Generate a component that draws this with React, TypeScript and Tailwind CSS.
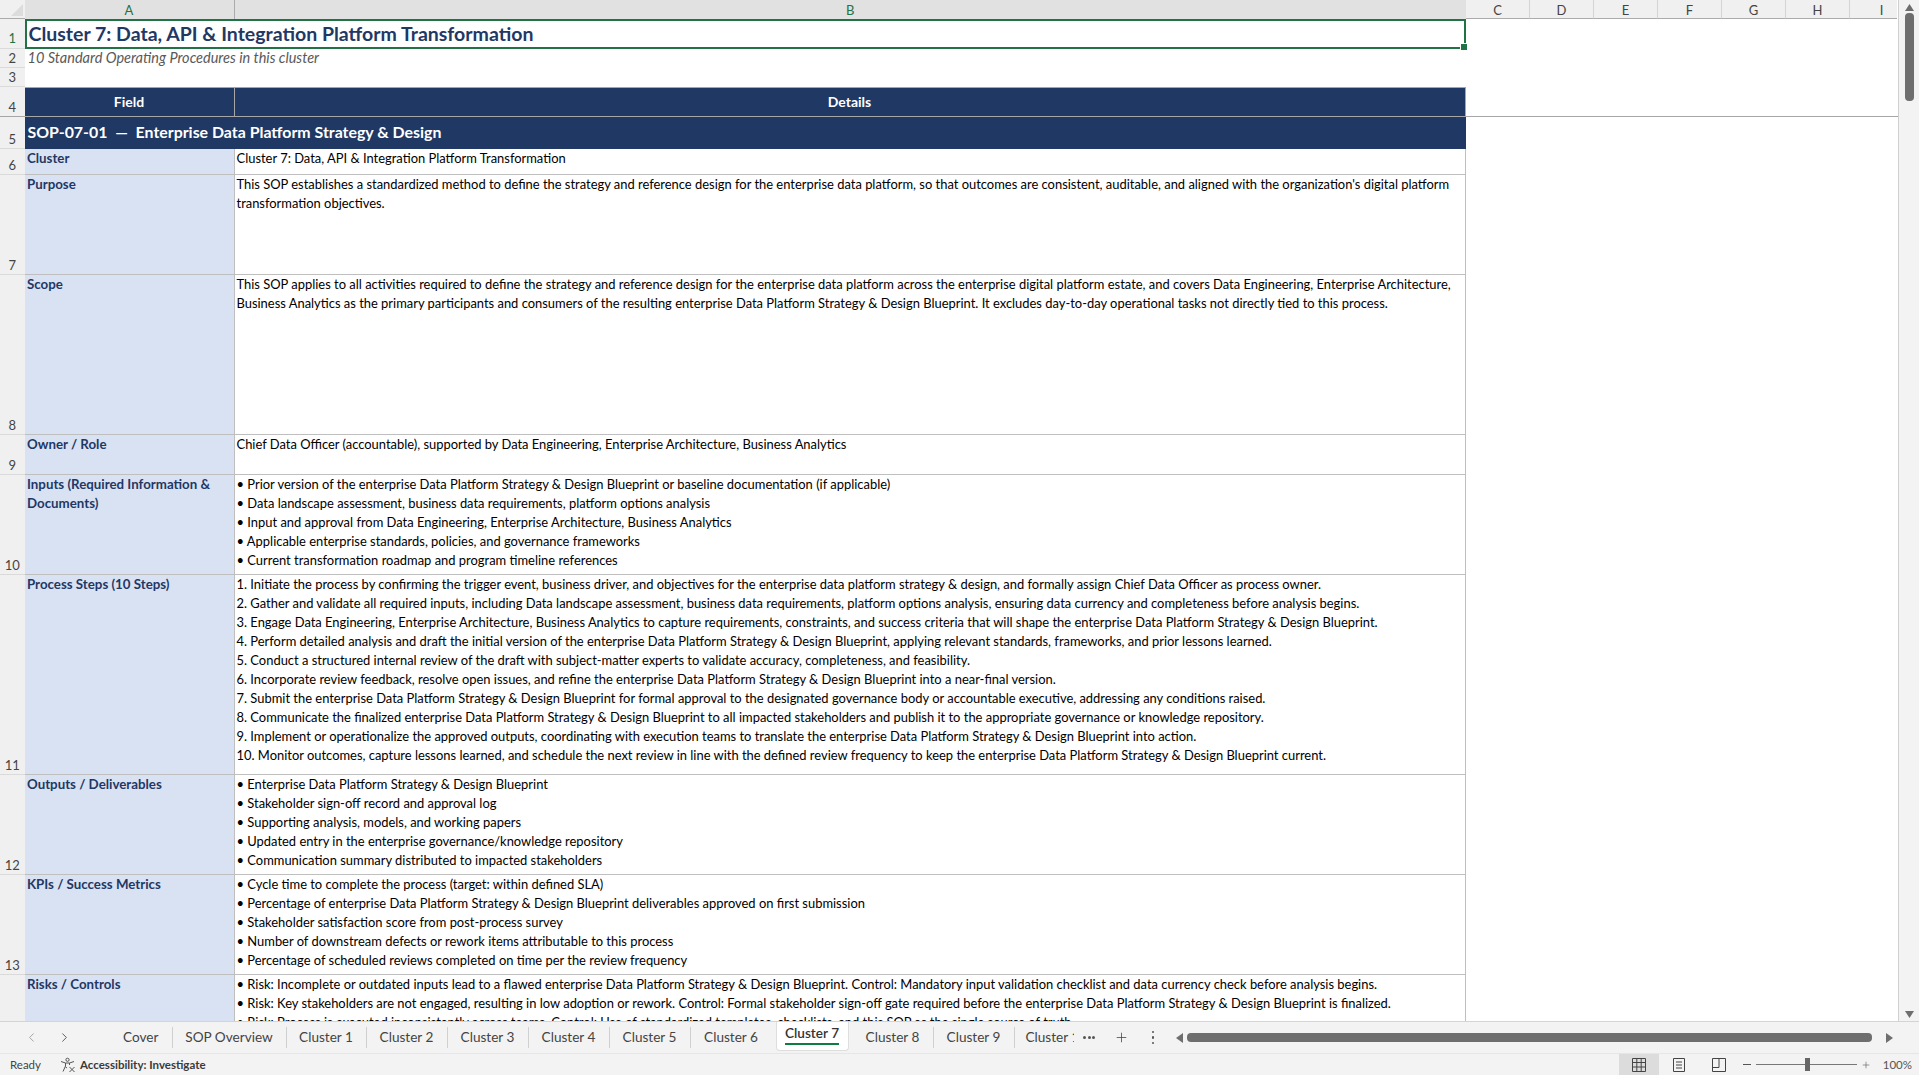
import { ChevronLeft, ChevronRight, Plus } from "lucide-react";

const FONT = "font-['Lato','Liberation_Sans',sans-serif]";

const rows = [
  {
    n: 6,
    h: "h-[26.5px]",
    label: ["Cluster"],
    lines: ["Cluster 7: Data, API & Integration Platform Transformation"],
  },
  {
    n: 7,
    h: "h-[100px]",
    label: ["Purpose"],
    lines: [
      "This SOP establishes a standardized method to define the strategy and reference design for the enterprise data platform, so that outcomes are consistent, auditable, and aligned with the organization's digital platform",
      "transformation objectives.",
    ],
  },
  {
    n: 8,
    h: "h-[160px]",
    label: ["Scope"],
    lines: [
      "This SOP applies to all activities required to define the strategy and reference design for the enterprise data platform across the enterprise digital platform estate, and covers Data Engineering, Enterprise Architecture,",
      "Business Analytics as the primary participants and consumers of the resulting enterprise Data Platform Strategy & Design Blueprint. It excludes day-to-day operational tasks not directly tied to this process.",
    ],
  },
  {
    n: 9,
    h: "h-[40px]",
    label: ["Owner / Role"],
    lines: ["Chief Data Officer (accountable), supported by Data Engineering, Enterprise Architecture, Business Analytics"],
  },
  {
    n: 10,
    h: "h-[100px]",
    label: ["Inputs (Required Information &", "Documents)"],
    lines: [
      "• Prior version of the enterprise Data Platform Strategy & Design Blueprint or baseline documentation (if applicable)",
      "• Data landscape assessment, business data requirements, platform options analysis",
      "• Input and approval from Data Engineering, Enterprise Architecture, Business Analytics",
      "• Applicable enterprise standards, policies, and governance frameworks",
      "• Current transformation roadmap and program timeline references",
    ],
  },
  {
    n: 11,
    h: "h-[200px]",
    label: ["Process Steps (10 Steps)"],
    lines: [
      "1. Initiate the process by confirming the trigger event, business driver, and objectives for the enterprise data platform strategy & design, and formally assign Chief Data Officer as process owner.",
      "2. Gather and validate all required inputs, including Data landscape assessment, business data requirements, platform options analysis, ensuring data currency and completeness before analysis begins.",
      "3. Engage Data Engineering, Enterprise Architecture, Business Analytics to capture requirements, constraints, and success criteria that will shape the enterprise Data Platform Strategy & Design Blueprint.",
      "4. Perform detailed analysis and draft the initial version of the enterprise Data Platform Strategy & Design Blueprint, applying relevant standards, frameworks, and prior lessons learned.",
      "5. Conduct a structured internal review of the draft with subject-matter experts to validate accuracy, completeness, and feasibility.",
      "6. Incorporate review feedback, resolve open issues, and refine the enterprise Data Platform Strategy & Design Blueprint into a near-final version.",
      "7. Submit the enterprise Data Platform Strategy & Design Blueprint for formal approval to the designated governance body or accountable executive, addressing any conditions raised.",
      "8. Communicate the finalized enterprise Data Platform Strategy & Design Blueprint to all impacted stakeholders and publish it to the appropriate governance or knowledge repository.",
      "9. Implement or operationalize the approved outputs, coordinating with execution teams to translate the enterprise Data Platform Strategy & Design Blueprint into action.",
      "10. Monitor outcomes, capture lessons learned, and schedule the next review in line with the defined review frequency to keep the enterprise Data Platform Strategy & Design Blueprint current.",
    ],
  },
  {
    n: 12,
    h: "h-[100px]",
    label: ["Outputs / Deliverables"],
    lines: [
      "• Enterprise Data Platform Strategy & Design Blueprint",
      "• Stakeholder sign-off record and approval log",
      "• Supporting analysis, models, and working papers",
      "• Updated entry in the enterprise governance/knowledge repository",
      "• Communication summary distributed to impacted stakeholders",
    ],
  },
  {
    n: 13,
    h: "h-[100px]",
    label: ["KPIs / Success Metrics"],
    lines: [
      "• Cycle time to complete the process (target: within defined SLA)",
      "• Percentage of enterprise Data Platform Strategy & Design Blueprint deliverables approved on first submission",
      "• Stakeholder satisfaction score from post-process survey",
      "• Number of downstream defects or rework items attributable to this process",
      "• Percentage of scheduled reviews completed on time per the review frequency",
    ],
  },
  {
    n: 14,
    h: "h-[100px]",
    label: ["Risks / Controls"],
    lines: [
      "• Risk: Incomplete or outdated inputs lead to a flawed enterprise Data Platform Strategy & Design Blueprint. Control: Mandatory input validation checklist and data currency check before analysis begins.",
      "• Risk: Key stakeholders are not engaged, resulting in low adoption or rework. Control: Formal stakeholder sign-off gate required before the enterprise Data Platform Strategy & Design Blueprint is finalized.",
      "• Risk: Process is executed inconsistently across teams. Control: Use of standardized templates, checklists, and this SOP as the single source of truth.",
    ],
  },
];

const tabs = ["Cover", "SOP Overview", "Cluster 1", "Cluster 2", "Cluster 3", "Cluster 4", "Cluster 5", "Cluster 6", "Cluster 7", "Cluster 8", "Cluster 9"];

function RowNum({ n, h, active, noBorder }: { n: number; h: string; active?: boolean; noBorder?: boolean }) {
  return (
    <div
      className={`${h} w-[24.5px] shrink-0 bg-[#f0f0f0] flex items-end justify-center text-[13px] ${active ? "leading-[20px]" : "leading-[17px]"} ${noBorder ? "" : "border-b border-[#dadada]"} ${active ? "text-[#217346] bg-[#e1e1e1]" : "text-[#444]"}`}
    >
      {n}
    </div>
  );
}

function ColHeaders() {
  const cols = ["C", "D", "E", "F", "G", "H"];
  return (
    <div className="flex h-[19px] shrink-0 text-[13px] leading-[21px] text-[#444]">
      <div className="w-[24.5px] shrink-0 bg-[#f0f0f0] border-b border-[#ababab] flex items-end justify-end p-[2px]">
        <div className="w-0 h-0 border-l-[12px] border-l-transparent border-b-[12px] border-b-[#dcdcdc]" />
      </div>
      <div className="w-[210px] shrink-0 bg-[#e1e1e1] text-center text-[#217346] border-r border-[#ababab]">A</div>
      <div className="w-[1231.5px] shrink-0 bg-[#e1e1e1] text-center text-[#217346]">B</div>
      {cols.map((c) => (
        <div key={c} className="w-[64px] shrink-0 bg-[#f0f0f0] text-center border-r border-[#d4d4d4] border-b border-b-[#ababab]">
          {c}
        </div>
      ))}
      <div className="w-[47px] shrink-0 bg-[#f0f0f0] text-center border-b border-[#ababab] pl-[16px]">I</div>
    </div>
  );
}

function Sheet() {
  return (
    <div className="flex-1 min-h-0 overflow-hidden bg-white">
      {/* title rows */}
      <div className="flex">
        <RowNum n={1} h="h-[30px]" active />
        <div className="relative w-[1441.5px] h-[30px] border-2 border-[#217346] pl-[2px] text-[19.5px] leading-[26px] font-bold text-[#1f3864]">
          Cluster 7: Data, API &amp; Integration Platform Transformation
          <div className="absolute right-[-4px] bottom-[-4px] w-[6px] h-[6px] bg-[#217346] border border-white box-content" />
        </div>
      </div>
      <div className="flex">
        <RowNum n={2} h="h-[19px]" />
        <div className="pl-[3px] text-[14.5px] leading-[18px] italic text-[#595959]">10 Standard Operating Procedures in this cluster</div>
      </div>
      <div className="flex">
        <RowNum n={3} h="h-[19px]" />
      </div>
      {/* frozen header */}
      <div className="flex border-b border-[#a6a6a6]">
        <RowNum n={4} h="h-[28.5px]" noBorder />
        <div className="w-[210px] h-[28.5px] bg-[#1f3864] border-r border-t border-[#a6a6a6] text-center text-white font-bold text-[14px] leading-[28px]">Field</div>
        <div className="w-[1231px] h-[28.5px] bg-[#1f3864] border-r border-t border-[#a6a6a6] text-center text-white font-bold text-[14px] leading-[28px]">Details</div>
      </div>
      <div className="flex">
        <RowNum n={5} h="h-[32px]" />
        <div className="w-[1441.5px] h-[32px] bg-[#1f3864] pl-[3px] text-white font-bold text-[15.9px] leading-[30px] whitespace-pre">SOP-07-01  —  Enterprise Data Platform Strategy &amp; Design</div>
      </div>
      {rows.map((r) => (
        <div key={r.n} className="flex">
          <RowNum n={r.n} h={r.h} />
          <div className={`${r.h} w-[210px] shrink-0 bg-[#d9e2f3] border-b border-r border-[#bfbfbf] pl-[2.5px] text-[13.3px] leading-[19px] font-bold text-[#1f3864]`}>
            {r.label.map((l) => (
              <div key={l}>{l}</div>
            ))}
          </div>
          <div className={`${r.h} w-[1231.5px] shrink-0 border-b border-r border-[#bfbfbf] pl-[2px] text-[12.93px] leading-[19px] text-black whitespace-nowrap overflow-hidden`}>
            {r.lines.map((l) => (
              <div key={l}>{l}</div>
            ))}
          </div>
        </div>
      ))}
    </div>
  );
}

function VScroll() {
  return (
    <div className="w-[21px] shrink-0 bg-[#f3f3f3] border-l border-[#d0d0d0] flex flex-col items-center pt-[4px] pb-[3px]">
      <svg width="9" height="7" viewBox="0 0 9 7"><path d="M4.5 0 9 7H0z" fill="#6e6e6e" /></svg>
      <div className="mt-[2px] w-[9px] h-[88px] rounded-[4px] bg-[#6e6e6e]" />
      <div className="flex-1" />
      <svg width="9" height="7" viewBox="0 0 9 7"><path d="M4.5 7 9 0H0z" fill="#6e6e6e" /></svg>
    </div>
  );
}

function TabBar() {
  return (
    <div className="h-[32px] shrink-0 bg-[#f3f3f3] border-t border-[#d4d4d4] flex items-center text-[13.6px] text-[#444]">
      <div className="w-[110px] shrink-0 flex items-center pl-[24px] gap-[18px] text-[#555]">
        <ChevronLeft size={15} strokeWidth={1.5} className="text-[#a0a0a0]" />
        <ChevronRight size={15} strokeWidth={1.5} />
      </div>
      {tabs.map((t) =>
        t === "Cluster 7" ? (
          <div key={t} className="w-[73px] h-[29px] -mt-[3px] mx-[4px] shrink-0 bg-white rounded-b-[4px] border-b border-x border-[#dedede] flex justify-center">
            <span className="h-[23px] px-0 pt-[2px] border-b-2 border-[#107c41] font-semibold text-[#333] leading-[19px]">{t}</span>
          </div>
        ) : (
          <div key={t} className={`${t === "Cover" ? "w-[62.5px]" : t === "SOP Overview" ? "w-[114px]" : t === "Cluster 1" ? "w-[80px]" : "w-[81px]"} shrink-0 text-center ${t === "Cluster 6" ? "" : "border-r border-[#d0d0d0]"}`}>
            {t}
          </div>
        ),
      )}
      <div className="w-[59px] shrink-0 overflow-hidden whitespace-nowrap pl-[11px]">Cluster 10</div>
      <div className="w-[25px] ml-[3px] shrink-0 flex justify-center gap-[1.5px]">
        <span className="w-[3px] h-[3px] bg-[#555] rounded-full" />
        <span className="w-[3px] h-[3px] bg-[#555] rounded-full" />
        <span className="w-[3px] h-[3px] bg-[#555] rounded-full" />
      </div>
      <Plus size={15} strokeWidth={1.25} className="ml-[12px] shrink-0 text-[#444]" />
      <div className="ml-[23px] shrink-0 flex flex-col gap-[3px]">
        <span className="w-[2.5px] h-[2.5px] bg-[#555] rounded-full" />
        <span className="w-[2.5px] h-[2.5px] bg-[#555] rounded-full" />
        <span className="w-[2.5px] h-[2.5px] bg-[#555] rounded-full" />
      </div>
      <div className="ml-[22px] flex-1 flex items-center pr-[26px]">
        <svg width="7" height="10" viewBox="0 0 7 10"><path d="M0 5 7 0v10z" fill="#6e6e6e" /></svg>
        <div className="mx-[4px] flex-1 h-[9px] rounded-[4px] bg-[#6e6e6e]" />
        <div className="w-[10px]" />
        <svg width="7" height="10" viewBox="0 0 7 10"><path d="M7 5 0 0v10z" fill="#6e6e6e" /></svg>
      </div>
    </div>
  );
}

function StatusBar() {
  return (
    <div className="h-[22px] shrink-0 bg-[#f3f3f3] border-t border-[#e6e6e6] flex items-center text-[11.5px] text-[#444]">
      <span className="ml-[10px] w-[50px]">Ready</span>
      <svg width="16" height="16" viewBox="0 0 16 16" fill="none" stroke="#555" strokeWidth="1">
        <circle cx="7.5" cy="2.8" r="1.6" />
        <path d="M1 4.5 5.5 6v3L3 14.5M14 4.5 9.5 6v2M5.5 6h4M5.5 10 7 11" />
        <path d="m9.5 10 5 5m0-5-5 5" />
      </svg>
      <span className="ml-[4px] font-bold text-[#3a3a3a] text-[11.5px]">Accessibility: Investigate</span>
      <div className="flex-1" />
      <div className="w-[40px] h-[22px] bg-[#dcdcdc] flex items-center justify-center">
        <svg width="14" height="14" viewBox="0 0 14 14" fill="none" stroke="#444"><path d="M.5.5h13v13H.5zM.5 4.5h13M.5 9h13M4.8.5v13M9.2.5v13" /></svg>
      </div>
      <div className="w-[40px] flex justify-center">
        <svg width="14" height="14" viewBox="0 0 14 14" fill="none" stroke="#444"><path d="M1.5.5h11v13h-11zM4 4h6M4 7h6M4 10h6" /></svg>
      </div>
      <div className="w-[40px] flex justify-center">
        <svg width="14" height="14" viewBox="0 0 14 14" fill="none" stroke="#444"><path d="M.5.5h13v13H.5zM.5 9.5h6.5V.5M7 9.5h0" /></svg>
      </div>
      <span className="ml-[4px] w-[8px] h-[1px] bg-[#555]" />
      <div className="ml-[5px] relative w-[101px] h-[1px] bg-[#777]">
        <div className="absolute left-[49px] top-[-6px] w-[5px] h-[13px] bg-[#666]" />
      </div>
      <Plus size={10} strokeWidth={1.25} className="ml-[4px]" />
      <span className="ml-[12px] mr-[7px] text-[11.5px] text-[#555]">100%</span>
    </div>
  );
}

export default function App() {
  return (
    <div className={`h-screen w-screen overflow-hidden flex flex-col bg-white ${FONT}`}>
      <div className="flex-1 min-h-0 flex">
        <div className="flex-1 min-w-0 flex flex-col">
          <ColHeaders />
          <Sheet />
        </div>
        <VScroll />
      </div>
      <TabBar />
      <StatusBar />
    </div>
  );
}
